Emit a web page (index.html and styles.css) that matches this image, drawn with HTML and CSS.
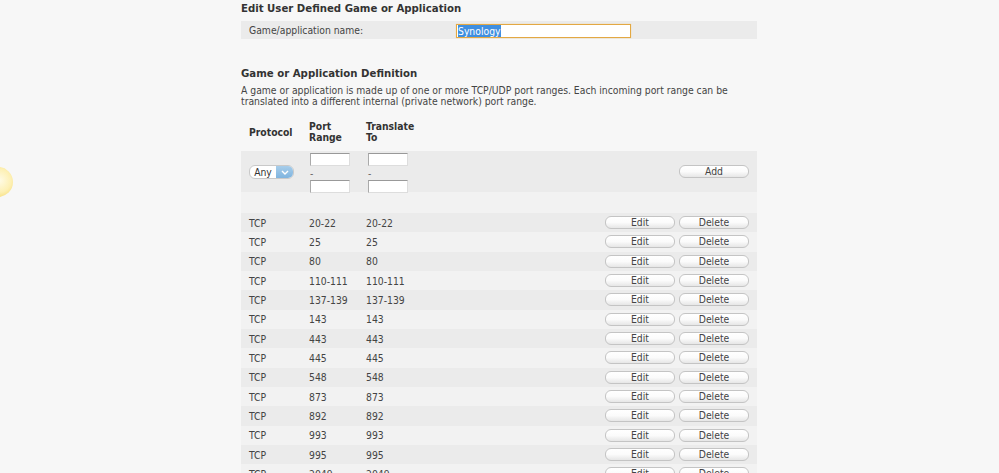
FILE: index.html
```html
<!doctype html>
<html lang="en-us">
<head>
<title>Edit User Defined Game or Application</title>
<meta http-equiv="Content-Type" content="text/html; charset=utf-8">
<link rel="stylesheet" href="styles.css">
</head>
<body>

<div id="spot"></div>

<div id="page">

  <h2>Edit User Defined Game or Application</h2>
  <div class="name-row">
    <label>Game/application name:</label>
    <div class="txt focus"><span class="sel">Synology</span></div>
  </div>

  <h2 class="sec">Game or Application Definition</h2>
  <p class="desc">A game or application is made up of one or more TCP/UDP port ranges. Each incoming port range can be translated into a different internal (private network) port range.</p>

  <div class="hdr">
    <div class="c1">Protocol</div>
    <div class="c2">Port<br>Range</div>
    <div class="c3">Translate<br>To</div>
  </div>

  <div class="add-row">
    <div class="c1">
      <div class="pick"><span class="pick-val">Any</span><span class="pick-arr"><svg width="8" height="5" viewBox="0 0 8 5"><path d="M1 1 L4 4 L7 1" fill="none" stroke="#fff" stroke-width="1.4"/></svg></span></div>
    </div>
    <div class="c2 rng"><div class="box"></div><div class="dash">-</div><div class="box"></div></div>
    <div class="c3 rng"><div class="box"></div><div class="dash">-</div><div class="box"></div></div>
    <div class="acts"><button class="btn">Add</button></div>
  </div>

  <div class="blank"></div>

  <div id="rules"></div>

</div>

<script>
let rules = [
  ['TCP','20-22','20-22'], ['TCP','25','25'], ['TCP','80','80'], ['TCP','110-111','110-111'],
  ['TCP','137-139','137-139'], ['TCP','143','143'], ['TCP','443','443'], ['TCP','445','445'],
  ['TCP','548','548'], ['TCP','873','873'], ['TCP','892','892'], ['TCP','993','993'],
  ['TCP','995','995'], ['TCP','2049','2049']
]
let sb = ''
for (let i=0,len=rules.length; i<len; i++) {
  let r = rules[i]
  sb += '<div class="row' + (i % 2 ? '' : ' odd') + '">'
     + '<div class="c1">' + r[0] + '</div><div class="c2">' + r[1] + '</div><div class="c3">' + r[2] + '</div>'
     + '<div class="acts"><button class="btn">Edit</button><button class="btn">Delete</button></div></div>'
}
document.getElementById('rules').innerHTML = sb
</script>
</body>
</html>
```

FILE: styles.css
```css
BODY {
  margin: 0;
  padding: 0;
  background: #f7f7f7;
  color: #444;
  font: 10.3px/12px "DejaVu Sans Condensed", "DejaVu Sans", Tahoma, sans-serif;
  font-stretch: condensed;
  overflow: hidden;
}
#page {
  width: 516px;
  margin: 0 0 0 241px;
}
H2 {
  margin: 0;
  padding: 1px 0 0 0;
  height: 20px;
  font: bold 11.3px/15px "DejaVu Sans Condensed", "DejaVu Sans", Tahoma, sans-serif;
  font-stretch: condensed;
  color: #333;
}
H2.sec {
  margin: 26px 0 0 0;
  height: 19px;
}
.name-row {
  display: flex;
  align-items: center;
  height: 18px;
  padding: 0 0 0 8px;
  background: #ebebeb;
}
.name-row LABEL {
  width: 207px;
}
.txt {
  width: 172px;
  height: 12px;
  margin: 1px 0 0 0;
  border: solid 1px #e3a843;
  box-shadow: 0 0 1px #f3cf8a;
  background: #fff;
  line-height: 12px;
  padding: 0 0 0 1px;
}
.sel {
  background: #3f8fe0;
  color: #fff;
}
.desc {
  margin: 0;
  padding: 0;
  line-height: 11px;
  height: 36px;
}
.hdr, .add-row, .row {
  display: flex;
  padding: 0 8px;
}
.c1 { width: 60px; }
.c2 { width: 57px; }
.c3 { width: 57px; }
.hdr {
  height: 22px;
  padding-bottom: 8px;
  font-weight: bold;
  color: #333;
  line-height: 11px;
  align-items: center;
}
.add-row {
  height: 41px;
  background: #ebebeb;
  align-items: center;
}
.rng {
  display: flex;
  flex-direction: column;
  align-self: flex-start;
  padding: 2px 0 0 1px;
}
.box {
  width: 38px;
  height: 11px;
  background: #fff;
  border-top: solid 1px #999;
  border-left: solid 1px #aaa;
  border-right: solid 1px #ddd;
  border-bottom: solid 1px #ddd;
}
.dash {
  height: 14px;
  line-height: 14px;
  color: #666;
}
.pick {
  display: flex;
  width: 43px;
  height: 12px;
  margin: 1px 0 0 0;
  border: solid 1px #c9c9c9;
  border-radius: 6px;
  overflow: hidden;
  background: #fff;
}
.pick-val {
  width: 26px;
  text-align: center;
  line-height: 12px;
  color: #333;
}
.pick-arr {
  flex: 1;
  display: flex;
  align-items: center;
  justify-content: center;
  background: linear-gradient(#a7cdea, #7fb4df);
}
.acts {
  margin: 0 0 0 auto;
  display: flex;
  gap: 4px;
}
.btn {
  width: 70px;
  height: 13px;
  padding: 0;
  border: solid 1px #c4c4c4;
  border-radius: 6px;
  background: linear-gradient(#ffffff, #fbfbfb 50%, #e6e6e6);
  font: 10.3px/11px "DejaVu Sans Condensed", "DejaVu Sans", Tahoma, sans-serif;
  font-stretch: condensed;
  color: #444;
}
.blank {
  height: 21px;
  background: #f2f2f2;
}
.row {
  height: 19.33px;
  align-items: center;
  background: #f2f2f2;
}
.row.odd {
  background: #ebebeb;
}
#spot {
  position: absolute;
  left: -17px;
  top: 167px;
  width: 30px;
  height: 30px;
  border-radius: 50%;
  background: radial-gradient(circle at 55% 45%, #fffbe6 0%, #fdf0b4 50%, #f5d96e 85%, #eec95a 100%);
}
```
